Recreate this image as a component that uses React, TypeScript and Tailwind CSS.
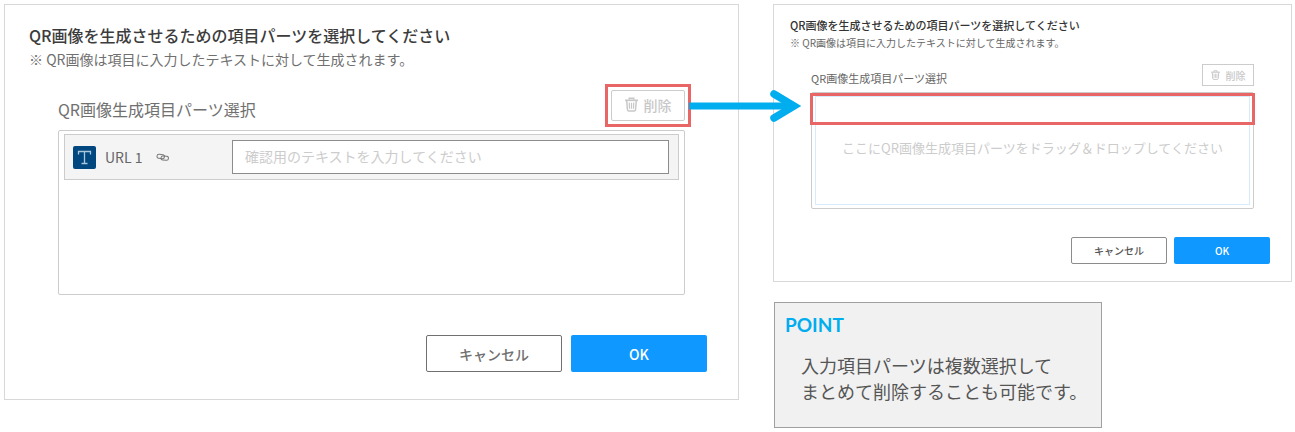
function TrashIcon({ className }: { className: string }) {
  return (
    <svg viewBox="0 0 14 16" fill="none" stroke="currentColor" className={className} aria-hidden="true">
      <path d="M0 3.500h14" strokeWidth="1.800" />
      <path d="M4.500 3V1.200h5V3" strokeWidth="1.500" />
      <path d="M1.800 4l.9 9.800c.1.8.6 1.200 1.300 1.200h6c.7 0 1.200-.4 1.300-1.200L12.200 4" strokeWidth="1.600" />
      <path d="M4.600 6l.3 6.500M7 6v6.500M9.400 6l-.3 6.500" strokeWidth="1.300" />
    </svg>
  )
}

function LinkIcon() {
  return (
    <svg
      viewBox="0 0 14 9"
      fill="none"
      stroke="#777777"
      strokeWidth="1"
      className="ml-[13px] h-[9px] w-3.5 shrink-0"
      aria-hidden="true"
    >
      <rect x="1" y="1.500" width="7.500" height="4" rx="2" transform="rotate(6 5 3.500)" />
      <rect x="5" y="3.200" width="7.500" height="4" rx="2" transform="rotate(6 9 5)" />
    </svg>
  )
}

function TextPartIcon() {
  return (
    <svg viewBox="0 0 23 23" className="size-[23px] shrink-0" aria-hidden="true">
      <rect width="23" height="23" rx="2" fill="#00467f" />
      <path d="M5.500 8.500V5.500h12v3M11.500 5.500v12M8.500 17.500h6" fill="none" stroke="#a9c6dc" strokeWidth="1.300" />
    </svg>
  )
}

function Arrow() {
  return (
    <svg
      viewBox="0 0 114 34"
      fill="none"
      stroke="#00aeef"
      strokeWidth="7"
      className="absolute top-1/2 left-full z-10 ml-1 h-[34px] w-[114px] -translate-y-1/2"
      aria-hidden="true"
    >
      <path d="M0 17h100" />
      <path d="M85 5l20 12l-20 12" strokeWidth="7.500" strokeLinecap="round" />
    </svg>
  )
}

function BeforeDialog() {
  return (
    <section className="min-w-0 border border-[#d8d8d8] pt-[18px] pr-[31px] pb-[27px] pl-6">
      <h2 className="text-base leading-6 font-medium text-[#3c3c3c]">
        QR画像を生成させるための項目パーツを選択してください
      </h2>
      <p className="text-sm leading-6 text-[#707070]">※ QR画像は項目に入力したテキストに対して生成されます。</p>

      <div className="mt-[19px] mr-[22px] ml-[29px]">
        <div className="flex items-end justify-between">
          <h3 className="text-base leading-6 text-[#707070]">QR画像生成項目パーツ選択</h3>
          <div className="relative">
            <button
              type="button"
              className="flex h-[31px] w-[74px] items-center justify-center gap-1.5 rounded-xs border border-[#cccccc] pb-0.5 text-sm font-medium text-[#c8c8c8]"
            >
              <TrashIcon className="h-[15px] w-[13px]" />
              削除
            </button>
            <span className="pointer-events-none absolute -inset-1.5 border-3 border-[#e86666]" />
            <Arrow />
          </div>
        </div>

        {/* 選択済みの項目パーツ */}
        <div className="mt-[9px] h-[165px] rounded-xs border border-[#cccccc] px-[5px] py-[3px]">
          <div className="flex h-[46px] items-center border border-[#cccccc] bg-[#f4f4f4] pr-[9px] pl-2">
            <div className="flex w-[159px] items-center">
              <TextPartIcon />
              <label htmlFor="url1" className="ml-[9px] text-sm text-[#666666]">
                URL 1
              </label>
              <LinkIcon />
            </div>
            <input
              id="url1"
              type="text"
              placeholder="確認用のテキストを入力してください"
              className="h-[34px] min-w-0 flex-1 border border-[#8c8c8c] bg-white px-3 pb-0.5 text-sm placeholder:text-[#cccccc]"
            />
          </div>
        </div>
      </div>

      <div className="mt-10 flex justify-end gap-[9px] text-sm font-medium">
        <button type="button" className="h-[37px] w-[136px] rounded-xs border border-[#707070] text-[#707070]">
          キャンセル
        </button>
        <button type="button" className="h-[37px] w-[136px] rounded-xs bg-[#0f98ff] text-white">
          OK
        </button>
      </div>
    </section>
  )
}

function AfterDialog() {
  return (
    <section className="border border-[#d8d8d8] pt-2.5 pr-[21px] pb-[17px] pl-4">
      <h2 className="text-[11px] leading-5 font-medium text-[#333333]">
        QR画像を生成させるための項目パーツを選択してください
      </h2>
      <p className="text-[10px] leading-4 text-[#666666]">※ QR画像は項目に入力したテキストに対して生成されます。</p>

      <div className="mt-[13px] mr-4 ml-[21px]">
        <div className="flex items-end justify-between">
          <h3 className="text-[11px] leading-4 text-[#666666]">QR画像生成項目パーツ選択</h3>
          <button
            type="button"
            className="flex h-[22px] w-[52px] items-center justify-center gap-1.5 border border-[#cccccc] text-[10px] font-medium text-[#c8c8c8]"
          >
            <TrashIcon className="h-2.5 w-[9px]" />
            削除
          </button>
        </div>

        {/* ドロップエリア */}
        <div className="relative mt-1.5 h-[117px] rounded-xs border border-[#cccccc] p-[3px]">
          <div className="flex h-full items-center justify-center border border-[#d6ecfb] pb-1.5">
            <p className="text-[13px] leading-5 text-[#cccccc]">
              ここにQR画像生成項目パーツをドラッグ＆ドロップしてください
            </p>
          </div>
          <span className="pointer-events-none absolute -inset-x-0.5 top-0 h-8 border-3 border-[#e86666]" />
        </div>
      </div>

      <div className="mt-7 flex justify-end gap-[7px] text-[10px] font-medium">
        <button type="button" className="h-[27px] w-24 rounded-xs border border-[#8c8c8c] text-[#555555]">
          キャンセル
        </button>
        <button type="button" className="h-[27px] w-24 rounded-xs bg-[#0f98ff] text-white">
          OK
        </button>
      </div>
    </section>
  )
}

export default function App() {
  return (
    <main className="grid grid-cols-[735fr_519fr] items-start gap-[34px] bg-white py-1 pr-[3px] pl-1 font-['Noto_Sans_CJK_JP',sans-serif]">
      <BeforeDialog />

      <div className="min-w-0">
        <AfterDialog />

        <aside className="mt-5 ml-px w-[328px] border border-[#a0a0a0] bg-[#f1f1f1] px-2.5 pt-2 pb-[23px]">
          <h3 className="font-['Lato',sans-serif] text-[19px] leading-7 font-bold text-[#00aeef]">POINT</h3>
          <p className="mt-[13px] pl-4 text-lg leading-[26px] whitespace-nowrap text-[#555555]">
            入力項目パーツは複数選択して
            <br />
            まとめて削除することも可能です。
          </p>
        </aside>
      </div>
    </main>
  )
}
